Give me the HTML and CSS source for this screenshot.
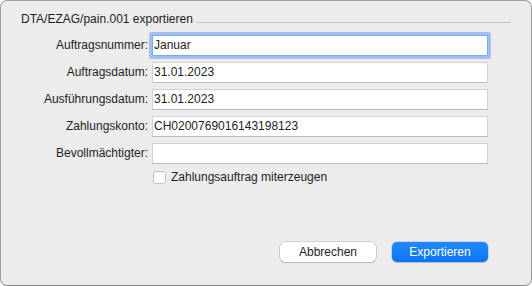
FILE: index.html
```html
<!DOCTYPE html>
<html lang="de">
<head>
<meta charset="utf-8">
<title>DTA/EZAG/pain.001 exportieren</title>
<link rel="stylesheet" href="styles.css">
</head>
<body>
<div class="window">
  <div class="group-title">
    <span class="title-text">DTA/EZAG/pain.001 exportieren</span>
    <span class="rule"></span>
  </div>
  <div class="form">
    <label class="label">Auftragsnummer:</label>
    <div class="field focused">Januar</div>
    <label class="label">Auftragsdatum:</label>
    <div class="field">31.01.2023</div>
    <label class="label">Ausführungsdatum:</label>
    <div class="field">31.01.2023</div>
    <label class="label">Zahlungskonto:</label>
    <div class="field">CH0200769016143198123</div>
    <label class="label">Bevollmächtigter:</label>
    <div class="field"></div>
    <div class="check-row">
      <span class="checkbox"></span>
      <span class="check-label">Zahlungsauftrag miterzeugen</span>
    </div>
  </div>
  <div class="footer">
    <button class="btn btn-secondary">Abbrechen</button>
    <button class="btn btn-primary">Exportieren</button>
  </div>
</div>
</body>
</html>
```
FILE: styles.css
```css
html, body {
  margin: 0;
  padding: 0;
  background: #ffffff;
}

body {
  font-family: "Liberation Sans", Arial, sans-serif;
  font-size: 12px;
  color: #1e1e1e;
}

.window {
  width: 532px;
  height: 286px;
  box-sizing: border-box;
  border: 1px solid #9d9d9d;
  border-bottom-color: #8a8a8a;
  border-radius: 7px;
  background: #ececec;
  padding: 11px 20px 23px 20px;
  display: flex;
  flex-direction: column;
}

.group-title {
  display: flex;
  align-items: flex-start;
  gap: 3px;
  height: 14px;
  line-height: 14px;
}

.title-text {
  white-space: nowrap;
}

.rule {
  flex: 1;
  height: 1px;
  margin-top: 10px;
  background: #c4c4c4;
}

.form {
  margin-top: 9px;
  display: grid;
  grid-template-columns: 127px 336px;
  column-gap: 4px;
  row-gap: 6px;
  grid-auto-rows: 21px;
}

.label {
  text-align: right;
  line-height: 21px;
  white-space: nowrap;
}

.field {
  box-sizing: border-box;
  height: 21px;
  background: #ffffff;
  border: 1px solid #d2d2d2;
  border-bottom-color: #bdbdbd;
  padding-left: 1px;
  line-height: 19px;
  white-space: nowrap;
  overflow: hidden;
}

.field.focused {
  border-color: #7ea9ea;
  box-shadow: 0 0 0 3px #9fc0f1;
  border-radius: 1px;
}

.check-row {
  grid-column: 2;
  display: flex;
  align-items: center;
  gap: 5px;
  height: 14px;
  margin-top: 0;
}

.checkbox {
  box-sizing: border-box;
  width: 13px;
  height: 13px;
  margin-left: 1px;
  background: #ffffff;
  border: 1px solid #c2c2c2;
  border-radius: 3px;
}

.check-label {
  line-height: 14px;
}

.footer {
  margin-top: auto;
  display: flex;
  justify-content: flex-end;
  gap: 16px;
  padding-right: 23px;
}

.btn {
  width: 96px;
  height: 20px;
  box-sizing: border-box;
  border: none;
  border-radius: 5px;
  font-family: "Liberation Sans", Arial, sans-serif;
  font-size: 12px;
  line-height: 20px;
  padding: 0;
  text-align: center;
}

.btn-secondary {
  background: #ffffff;
  color: #1e1e1e;
  box-shadow: 0 0 0 0.5px rgba(0, 0, 0, 0.22), 0 1px 1px rgba(0, 0, 0, 0.12);
}

.btn-primary {
  background: linear-gradient(#2289fc, #0b74f5);
  color: #ffffff;
  box-shadow: 0 0 0 0.5px rgba(0, 60, 160, 0.25), 0 1px 1px rgba(0, 0, 0, 0.12);
}
```
